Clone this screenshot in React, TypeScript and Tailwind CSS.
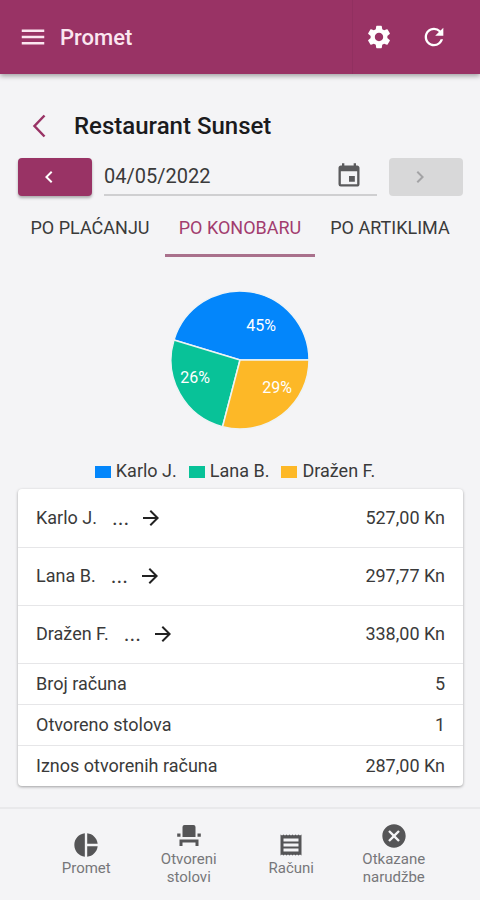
import { useState } from "react";
import {
  MdArrowForward,
  MdCancel,
  MdChevronLeft,
  MdChevronRight,
  MdEvent,
  MdMenu,
  MdPieChart,
  MdRefresh,
  MdSettings,
} from "react-icons/md";

type Waiter = {
  name: string;
  amount: number;
  label: string;
  fill: string;
  swatch: string;
};

const waiters: Waiter[] = [
  { name: "Karlo J.", amount: 527, label: "527,00 Kn", fill: "#0386fb", swatch: "bg-[#0386fb]" },
  { name: "Lana B.", amount: 297.77, label: "297,77 Kn", fill: "#08c298", swatch: "bg-[#08c298]" },
  { name: "Dražen F.", amount: 338, label: "338,00 Kn", fill: "#fdb827", swatch: "bg-[#fdb827]" },
];

const totals = [
  { name: "Broj računa", value: "5" },
  { name: "Otvoreno stolova", value: "1" },
  { name: "Iznos otvorenih računa", value: "287,00 Kn" },
];

const tabs = ["PO PLAĆANJU", "PO KONOBARU", "PO ARTIKLIMA"];

type IconProps = { className?: string };

function SeatIcon({ className }: IconProps) {
  return (
    <svg viewBox="0 0 28 28" className={className} fill="currentColor" aria-hidden="true">
      <path d="M9.500 3h9a2 2 0 0 1 2 2v10h-13V5a2 2 0 0 1 2-2zM2.200 11.500h3.300v3.300H2.200zM22.500 11.500h3.300v3.300H22.500zM4.500 17.500h19v6.500h-3v-3.500H7.500v3.500H4.500z" />
    </svg>
  );
}

function ReceiptIcon({ className }: IconProps) {
  return (
    <svg viewBox="0 0 28 28" className={className} aria-hidden="true">
      <path
        fill="currentColor"
        d="M3.500 3.500l1.500 1 1.500-1 1.500 1 1.500-1 1.500 1 1.500-1 1.500 1 1.500-1 1.500 1 1.500-1 1.500 1 1.500-1 1.500 1 1.500-1v21l-1.500-1-1.500 1-1.500-1-1.500 1-1.500-1-1.500 1-1.500-1-1.500 1-1.500-1-1.500 1-1.500-1-1.500 1-1.500-1-1.500 1z"
      />
      <path stroke="#f4f4f6" strokeWidth="3" d="M6.500 9h15M6.500 14h15M6.500 19h15" />
    </svg>
  );
}

const navItems = [
  { label: "Promet", icon: MdPieChart },
  { label: "Otvoreni stolovi", icon: SeatIcon },
  { label: "Računi", icon: ReceiptIcon },
  { label: "Otkazane narudžbe", icon: MdCancel },
];

const labelSpots = [
  { x: 21, y: -35 },
  { x: -45, y: 17 },
  { x: 37, y: 27 },
];

// Slices run counter-clockwise from three o'clock.
function PieChart() {
  const radius = 69;
  const total = waiters.reduce((sum, w) => sum + w.amount, 0);
  let start = 0;
  const slices = waiters.map((w) => {
    const end = start + (w.amount / total) * Math.PI * 2;
    const slice = {
      ...w,
      percent: Math.round((w.amount / total) * 100),
      path: `M0 0L${radius * Math.cos(start)} ${-radius * Math.sin(start)}A${radius} ${radius} 0 0 0 ${
        radius * Math.cos(end)
      } ${-radius * Math.sin(end)}Z`,
    };
    start = end;
    return slice;
  });

  return (
    <svg viewBox="-71 -71 142 142" className="mx-auto size-[142px]" role="img" aria-label="Promet po konobaru">
      {slices.map((s) => (
        <path key={s.name} d={s.path} fill={s.fill} stroke="#eef3f5" strokeWidth="1.5" strokeLinejoin="round" />
      ))}
      {slices.map((s, i) => (
        <text
          key={s.name}
          x={labelSpots[i].x}
          y={labelSpots[i].y}
          dy="6"
          textAnchor="middle"
          className="fill-white text-base"
        >
          {s.percent}%
        </text>
      ))}
    </svg>
  );
}

export default function App() {
  const [activeTab, setActiveTab] = useState(1);
  const [date, setDate] = useState("04/05/2022");

  return (
    <div className="flex min-h-screen flex-col bg-[#f4f4f6] font-['Roboto',sans-serif] text-[#3a3a3a]">
      <header className="flex h-[74px] items-center bg-[#993365] pl-[18px] text-white shadow-[0_2px_5px_rgba(0,0,0,0.35)]">
        <button type="button" aria-label="Izbornik" className="text-[#fbe6f0]">
          <MdMenu className="size-[30px]" />
        </button>
        <h1 className="ml-3 flex-1 text-[22px] font-medium text-[#fbe6f0]">Promet</h1>
        <div className="flex h-full items-center gap-[27px] border-l border-[#913060] pr-8 pl-3">
          <button type="button" aria-label="Postavke">
            <MdSettings className="size-7" />
          </button>
          <button type="button" aria-label="Osvježi">
            <MdRefresh className="size-7" />
          </button>
        </div>
      </header>

      <main className="flex-1 pb-5">
        <div className="flex items-center gap-7 px-[18px] pt-9">
          <button type="button" aria-label="Natrag" className="ml-3.5">
            <svg viewBox="0 0 14 24" className="h-6 w-3.5" fill="none" stroke="#993365" strokeWidth="2.5">
              <path d="M12.5 1.5L2.5 12L12.5 22.5" />
            </svg>
          </button>
          <h2 className="text-2xl leading-8 font-medium text-[#1b1b1d]">Restaurant Sunset</h2>
        </div>

        <div className="flex items-center gap-3 pt-4 pr-[17px] pl-[18px]">
          <button
            type="button"
            aria-label="Prethodni dan"
            className="flex h-[38px] w-[74px] items-center justify-center rounded-sm bg-[#993365] pr-3 text-white shadow-[0_2px_3px_rgba(0,0,0,0.3)]"
          >
            <MdChevronLeft className="size-6" />
          </button>
          <div className="flex h-[38px] min-w-0 flex-1 items-center border-b-2 border-[#cfcfd1] pr-3.5">
            <input
              type="text"
              aria-label="Datum"
              value={date}
              onChange={(e) => setDate(e.target.value)}
              className="min-w-0 flex-1 bg-transparent text-xl leading-8 outline-none"
            />
            <button type="button" aria-label="Odaberi datum" className="text-[#5b5b5d]">
              <MdEvent className="size-7" />
            </button>
          </div>
          <button
            type="button"
            disabled
            aria-label="Sljedeći dan"
            className="flex h-[38px] w-[74px] items-center justify-center rounded-sm bg-[#d8d8d9] pr-3 text-[#a3a3a5]"
          >
            <MdChevronRight className="size-6" />
          </button>
        </div>

        <div role="tablist" className="grid grid-cols-3 px-[15px]">
          {tabs.map((tab, i) => (
            <button
              key={tab}
              type="button"
              role="tab"
              aria-selected={i === activeTab}
              onClick={() => setActiveTab(i)}
              className={
                i === activeTab
                  ? "h-[61px] border-b-3 border-[#a9708c] pt-1.5 text-lg text-[#a23c6e]"
                  : "h-[61px] border-b-3 border-transparent pt-1.5 text-lg"
              }
            >
              {tab}
            </button>
          ))}
        </div>

        <div className="pt-8">
          <PieChart />
          <ul className="flex justify-center gap-3 pt-7 pr-2.5 text-lg leading-6">
            {waiters.map((w) => (
              <li key={w.name} className="flex items-center gap-[5px]">
                <span className={`mt-0.5 h-3 w-4 ${w.swatch}`} />
                {w.name}
              </li>
            ))}
          </ul>
        </div>

        <div className="mt-1.5 mr-[17px] ml-[18px] rounded-sm bg-white shadow-[0_1px_3px_rgba(0,0,0,0.35)]">
          <table className="w-full text-lg">
            <tbody>
              {waiters.map((w) => (
                <tr key={w.name} className="h-[58px] border-b border-[#e6e6e8]">
                  <th scope="row" className="pl-[18px] text-left font-normal">
                    <button type="button" className="flex items-center">
                      {w.name}
                      <span className="mr-2.5 ml-[15px] text-[22px] leading-7">...</span>
                      <MdArrowForward className="size-6 text-[#222]" />
                    </button>
                  </th>
                  <td className="pr-[18px] text-right">{w.label}</td>
                </tr>
              ))}
              {totals.map((t) => (
                <tr key={t.name} className="h-[41px] border-b border-[#e6e6e8] last:border-b-0">
                  <th scope="row" className="pl-[18px] text-left font-normal">
                    {t.name}
                  </th>
                  <td className="pr-[18px] text-right">{t.value}</td>
                </tr>
              ))}
            </tbody>
          </table>
        </div>
      </main>

      <nav className="grid h-[93px] grid-cols-4 border-t-2 border-[#e9e9eb] px-[35px] pb-0.5 text-[15px] leading-[18px] text-[#77777a]">
        {navItems.map(({ label, icon: Icon }) => (
          <a key={label} href="#" className="flex flex-col items-center justify-center px-3 text-center">
            <Icon className="size-7 text-[#555557]" />
            {label}
          </a>
        ))}
      </nav>
    </div>
  );
}
